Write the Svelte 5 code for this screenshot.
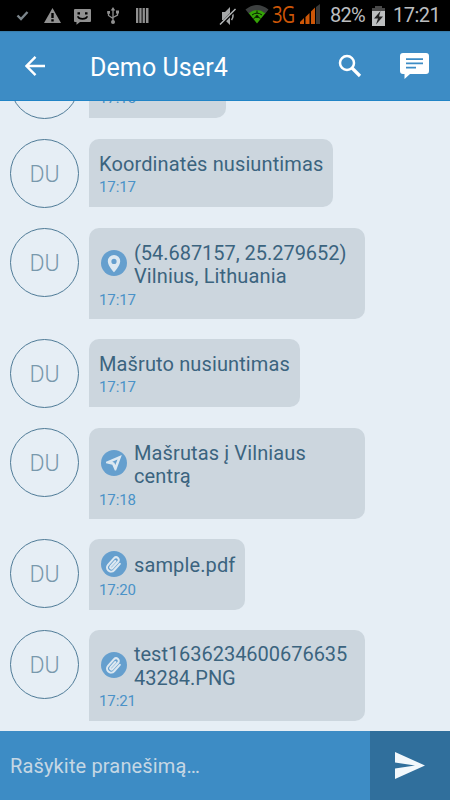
<script>
  const initials = 'DU'

  const messages = [
    { id: 1, lines: ['Sveiki'], time: '17:15' },
    { id: 2, lines: ['Koordinatės nusiuntimas'], time: '17:17' },
    { id: 3, icon: 'pin', lines: ['(54.687157, 25.279652)', 'Vilnius, Lithuania'], time: '17:17' },
    { id: 4, lines: ['Mašruto nusiuntimas'], time: '17:17' },
    { id: 5, icon: 'route', lines: ['Mašrutas į Vilniaus', 'centrą'], time: '17:18' },
    { id: 6, icon: 'clip', lines: ['sample.pdf'], time: '17:20' },
    { id: 7, icon: 'clip', lines: ['test1636234600676635', '43284.PNG'], time: '17:21' },
  ]

  // digits run wide at this size, words a little narrow
  const isNumeric = (line) => /\d{5}/.test(line)
</script>

<div class="screen">
  <div class="status">
    <svg class="notices" width="225" height="31" viewBox="0 0 225 31" fill="#909090">
      <path d="M17.5 15.5l3.5 3.5 6.5-7" fill="none" stroke="#7b858b" stroke-width="2.4" />
      <path fill-rule="evenodd" d="M52.5 8L61 23H44zM51.3 13v5h2.4v-5zM51.3 19.3v2.2h2.4v-2.2z" />
      <path fill-rule="evenodd" d="M75 9h15q1 0 1 1v11q0 1-1 1H80l-3.500 2.800V22H75q-1 0-1-1V10q0-1 1-1zM77.500 12.200v2.300H80v-2.300zM85 12.200v2.300h2.500v-2.300zM77 16.500q1 3.300 5.500 3.300t5.500-3.300l-1.200-.4q-1.300 2-4.300 2t-4.300-2z" />
      <path d="M113 9v12M108.500 13v2.500l4.500 3M117.500 13v2l-4.500 2.500" fill="none" stroke="#909090" stroke-width="1.300" />
      <path d="M113 7l2.300 3.600h-4.600zM107.200 11h2.800v2.800h-2.800zM116 10.600h3v3h-3z" />
      <circle cx="113" cy="22" r="2" />
      <path d="M136 8h2.300v15H136zM139.300 8h2.300v15h-2.300zM142.600 8h2.300v15h-2.300zM145.900 8h2.600v15h-2.600z" />
    </svg>
    <svg class="sound" width="18" height="20" viewBox="0 0 18 20">
      <path d="M3 6h3l5-5v18l-5-5H3z" fill="#a4a6a7" />
      <path d="M12.500 6q3 4 0 8" fill="none" stroke="#a4a6a7" stroke-width="1.500" />
      <path d="M2 18.500L17 3" stroke="#000" stroke-width="3" />
      <path d="M1 18.500L16.500 3" stroke="#b8bbbc" stroke-width="1.400" />
    </svg>
    <svg class="wifi" width="24" height="19" viewBox="0 0 24 19">
      <path d="M.5 4.500Q12-4.500 23.500 4.500l-3.200 4Q12 2.500 3.700 8.500z" fill="#3d4040" />
      <path d="M3.700 8.300Q12 1.700 20.300 8.300L12 18.500z" fill="#35a307" />
      <path d="M7 10Q12 6.200 17 10M12 5.500v3M8.500 13.500l2.500-1.500M15.500 13.500L13 12" fill="none" stroke="#061a00" stroke-width="1" />
      <circle cx="12" cy="11.500" r="1.500" fill="#061a00" />
    </svg>
    <span class="network">3G</span>
    <svg class="signal" width="20" height="20" viewBox="0 0 20 20">
      <path d="M0 20v-2l4-4v6zM5.500 20v-7l4-4v11zM11 20V7.500l4-4V20z" fill="#cc5607" />
      <path d="M16 20V3l4-3v20z" fill="#383838" />
    </svg>
    <span class="percent">82%</span>
    <svg class="battery" width="13" height="20" viewBox="0 0 13 20">
      <path d="M3 0h7v2h3v4H0V2h3z" fill="#494949" />
      <path d="M0 5h13v15H0z" fill="#bdbfc0" />
      <path d="M8.500 5L2 12.500h4L4 18.500l7-8H7z" fill="#222" />
    </svg>
    <span class="clock">17:21</span>
  </div>

  <header>
    <svg class="back" width="20" height="20" viewBox="0 0 20 20" fill="none" stroke="#fff" stroke-width="2.400">
      <path d="M20 10H2M10.500 .9L1.500 10l9 9.100" />
    </svg>
    <h1>Demo User4</h1>
    <svg class="search" width="24" height="24" viewBox="0 0 24 24" fill="none" stroke="#fff">
      <circle cx="9" cy="9" r="7" stroke-width="2.500" />
      <path d="M14 14l8 8" stroke-width="3.200" />
    </svg>
    <svg class="chat" width="29" height="26" viewBox="0 0 29 26">
      <path d="M3 0h23q3 0 3 3v15q0 3-3 3H10l-5.500 5V21H3q-3 0-3-3V3Q0 0 3 0z" fill="#fff" />
      <path d="M6 6.200h17M6 10.400h17M6 14.600h10" stroke="#3d8cc5" stroke-width="1.700" />
    </svg>
  </header>

  <main>
    {#each messages as message (message.id)}
      <div class="message">
        <div class="avatar">{initials}</div>
        <div class="bubble" class:wide={message.lines.length > 1}>
          <div class="content" class:with-icon={message.icon}>
            {#if message.icon}
              <svg class="badge" width="26" height="26" viewBox="0 0 26 26">
                <circle cx="13" cy="13" r="13" fill="#659fce" />
                {#if message.icon === 'pin'}
                  <path fill="#dce8f1" fill-rule="evenodd" d="M13 5a6.200 6.200 0 0 0-6.200 6.200C6.800 16 13 22.300 13 22.300s6.200-6.300 6.200-11.100A6.200 6.200 0 0 0 13 5zm0 3.800a2.600 2.600 0 1 1 0 5.200 2.600 2.600 0 0 1 0-5.200z" />
                {:else if message.icon === 'route'}
                  <path fill="#dce8f1" fill-rule="evenodd" d="M20.800 5L5 11.800v1.400l6.300 1.500 2.500 5.900h1.300zM16.500 9.500l-2.200 5.600-.9-2.400-2.100-.9z" />
                {:else}
                  <path
                    transform="translate(13 13.300) rotate(42) scale(.84)"
                    fill="none"
                    stroke="#dce8f1"
                    stroke-width="2.500"
                    stroke-linecap="round"
                    d="M4.800-5V5.200a4.800 4.800 0 0 1-9.600 0V-5.500a3.200 3.200 0 0 1 6.400 0V4.600a1.500 1.500 0 0 1-3 0V-4"
                  />
                {/if}
              </svg>
            {/if}
            <div class="text">
              {#each message.lines as line}
                <div class:numeric={isNumeric(line)}>{line}</div>
              {/each}
            </div>
          </div>
          <time>{message.time}</time>
        </div>
      </div>
    {/each}
  </main>

  <footer>
    <div class="input">Rašykite pranešimą…</div>
    <div class="send">
      <svg width="30" height="27" viewBox="0 0 30 27">
        <path d="M0 0l30 13.500L0 27V16.500l20-3-20-3z" fill="#f2f8fc" />
      </svg>
    </div>
  </footer>
</div>

<style>
  :global(body) {
    margin: 0;
  }

  .screen {
    width: 450px;
    height: 800px;
    display: flex;
    flex-direction: column;
    overflow: hidden;
    background: #e6eef5;
    font-family: Roboto, sans-serif;
    white-space: nowrap;
  }

  .status {
    height: 31px;
    flex-shrink: 0;
    display: flex;
    align-items: center;
    background: #000;
    color: #bcbec0;
    font-size: 20px;
    line-height: 33px;
  }

  .status svg,
  .status span {
    flex-shrink: 0;
  }

  .status .notices { margin-right: -6px; }

  .wifi {
    margin-left: 8px;
    margin-top: -2px;
  }

  .network {
    width: 24px;
    margin-left: 3px;
    margin-top: -2px;
    color: #cc5607;
    font-size: 23px;
    font-family: 'Open Sans', sans-serif;
    letter-spacing: -1px;
    transform: scaleX(0.8);
    transform-origin: left;
  }

  .signal {
    margin-left: 4px;
    margin-top: -3px;
  }

  .percent {
    width: 36px;
    margin-left: 10px;
    letter-spacing: -0.7px;
  }

  .battery { margin-left: 6px; }

  .clock {
    margin-left: 8px;
    letter-spacing: -0.5px;
  }

  header {
    height: 70px;
    box-sizing: border-box;
    flex-shrink: 0;
    display: flex;
    align-items: center;
    padding: 0 21px 0 25px;
    background: #3d8cc5;
    border-bottom: 1px solid #2184c6;
    box-shadow: inset 0 2px 1px -1px #397da9;
  }

  .back { margin-top: 1px; }

  h1 {
    flex: 1;
    margin: 5px 0 0 45px;
    color: #fff;
    font-size: 25px;
    font-weight: 400;
    line-height: 30px;
    letter-spacing: 0.1px;
  }

  .search {
    margin-right: 38px;
    margin-top: 1px;
  }

  .chat { margin-top: 1px; }

  main {
    flex: 1;
    min-height: 0;
    display: flex;
    flex-direction: column;
    justify-content: flex-end;
    gap: 20px;
    padding: 0 10px 10px;
    overflow: hidden;
  }

  .message {
    display: flex;
    align-items: flex-start;
    gap: 10px;
    flex-shrink: 0;
  }

  .avatar {
    width: 69px;
    height: 69px;
    box-sizing: border-box;
    border: 1px solid #4f7b97;
    border-radius: 50%;
    color: #7898ac;
    font-size: 23px;
    font-weight: 300;
    line-height: 69px;
    text-align: center;
  }

  .bubble {
    box-sizing: border-box;
    min-width: 137px;
    padding: 13.3px 10px 9.7px;
    border-radius: 10px 10px 10px 0;
    background: #ccd6de;
  }

  .wide { width: 276px; }

  .content {
    display: flex;
    align-items: center;
    gap: 7px;
  }

  .with-icon { min-height: 26.6px; }

  .badge {
    margin: -4px 0 0 2px;
    flex-shrink: 0;
  }

  .text {
    color: #3b647f;
    font-size: 20px;
    line-height: 23.5px;
    letter-spacing: 0.12px;
  }

  .numeric { letter-spacing: -0.03px; }

  time {
    display: block;
    margin-top: 2px;
    color: #4a92c8;
    font-size: 15px;
    line-height: 19px;
    letter-spacing: -0.1px;
  }

  footer {
    height: 69px;
    flex-shrink: 0;
    display: flex;
    background: #3d8cc5;
  }

  .input {
    flex: 1;
    padding-left: 10px;
    color: #c5d7e4;
    font-size: 20px;
    line-height: 70px;
    letter-spacing: 0.15px;
  }

  .send {
    width: 80px;
    box-sizing: border-box;
    display: flex;
    align-items: center;
    padding-left: 25px;
    background: #306f9c;
  }
</style>
